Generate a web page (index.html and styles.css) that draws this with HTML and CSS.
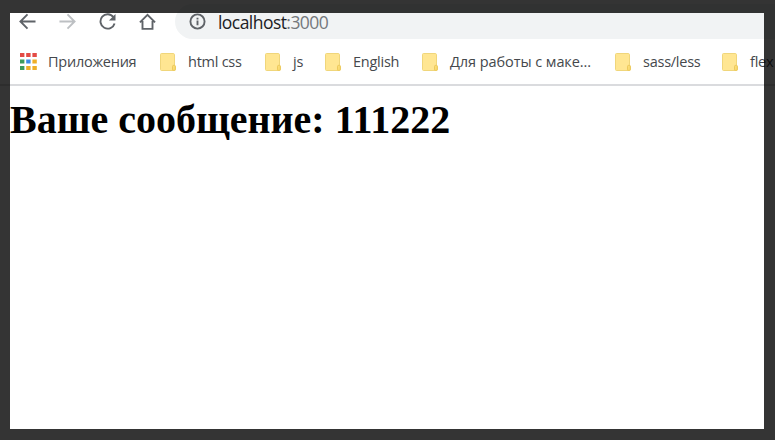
FILE: index.html
```
<!DOCTYPE html>
<html lang="ru">
<head>
<meta charset="utf-8">
<title>localhost:3000</title>
<link rel="stylesheet" href="styles.css">
</head>
<body>
<svg class="defs" aria-hidden="true"><symbol id="folder" viewBox="0 0 16 18"><path d="M1.5.5h11.7c.8 0 1.3.5 1.3 1.2v10.6c.7.2 1 .6 1 1.2v3c0 .7-.4 1-1 1h-13c-.6 0-1-.4-1-1v-15c0-.6.4-1 1-1z" fill="#ffe692" stroke="#f0d67b"/><path d="M12.5 16.8v-3.3c0-.8.5-1.2 1.3-1.2s1.5.4 1.5 1.2v3c0 .6-.4.8-1 .8h-1.2c-.4 0-.6-.2-.6-.5z" fill="#fbdc74" stroke="#ecc95c"/></symbol></svg>
<header class="toolbar">
  <svg class="nav" viewBox="0 0 18 18"><path d="M17.5 9H2M9 1.5 1.5 9 9 16.5"/></svg>
  <svg class="nav muted" viewBox="0 0 18 18"><path d="M.5 9H16M9 1.5 16.5 9 9 16.5"/></svg>
  <svg class="nav" viewBox="0 0 18 18"><path d="M15.3 4.4A7.6 7.6 0 1 0 16.5 11"/><path class="solid" d="M17.5 1v7h-7z"/></svg>
  <svg class="nav" viewBox="0 0 18 18"><path d="M1 10 9 2l8 8M3.7 8.5v8.3h10.6V8.5"/></svg>
  <div class="address">
    <svg class="info" viewBox="0 0 18 18"><circle cx="9" cy="9" r="7.5"/><path d="M9 8v5M9 5v2"/></svg>
    <span class="url">localhost<span class="port">:3000</span></span>
  </div>
</header>
<nav class="bookmarks">
  <a class="item apps"><svg viewBox="0 0 18 18"><path fill="#e34b45" d="M0 0h4.4v4H0zM6.2 0h4.4v4H6.2zM12.4 0h4.4v4h-4.4z"/><path fill="#3e9b5c" d="M0 6.5h4.4v4H0zM0 13h4.4v4H0z"/><path fill="#3c8be8" d="M6.2 6.5h4.4v4H6.2z"/><path fill="#eeaf28" d="M12.4 6.5h4.4v4h-4.4zM6.2 13h4.4v4H6.2zM12.4 13h4.4v4h-4.4z"/></svg><span>Приложения</span></a>
  <a class="item html"><svg><use href="#folder"/></svg><span>html css</span></a>
  <a class="item js"><svg><use href="#folder"/></svg><span>js</span></a>
  <a class="item english"><svg><use href="#folder"/></svg><span>English</span></a>
  <a class="item work"><svg><use href="#folder"/></svg><span>Для работы с маке...</span></a>
  <a class="item sass"><svg><use href="#folder"/></svg><span>sass/less</span></a>
  <a class="item flex"><svg><use href="#folder"/></svg><span>flex</span></a>
</nav>
<main><h1>Ваше сообщение: 111222</h1></main>
</body>
</html>
```
FILE: styles.css
```
* { box-sizing: border-box; }
body { margin: 0; height: 440px; overflow: hidden; position: relative; background: #fff; font-family: "Open Sans", "Noto Sans", sans-serif; }
body::after { content: ""; position: absolute; inset: 0; border: solid rgba(0, 0, 0, .795); border-width: 13px 11px 11px 10px; }
.defs { display: none; }
.toolbar { height: 39px; padding: 4px 0 0 19px; display: flex; align-items: center; gap: 23px; }
.nav, .info { width: 17px; height: 17px; flex: none; fill: none; stroke: #5f6368; stroke-width: 2; }
.muted { stroke: #bdc0c3; }
.nav .solid { fill: #5f6368; stroke: none; }
.address { flex: 1; height: 35px; margin-left: -4px; padding-left: 14px; display: flex; align-items: center; background: #f1f3f4; border-radius: 18px 0 0 18px; }
.info { margin-right: 12px; }
.url { font-size: 17.5px; letter-spacing: -.55px; color: #202124; }
.port { color: #74787c; }
.bookmarks { height: 47px; padding-left: 20px; display: flex; align-items: center; border-bottom: 2px solid #dadbde; }
.item { display: flex; align-items: center; flex: none; white-space: nowrap; font-size: 14.5px; letter-spacing: -.25px; color: #45484c; }
.item svg { width: 16px; height: 18px; margin-right: 12px; flex: none; }
.apps { width: 140px; }
.apps svg { width: 18px; margin-right: 10px; }
.html { width: 105px; }
.js { width: 60px; }
.english { width: 97px; }
.work { width: 193px; letter-spacing: -.07px; }
.sass { width: 107px; }
.flex { width: 60px; }
h1 { margin: 10px 0 0 10px; font: bold 40px/48px "Liberation Serif", serif; color: #000; white-space: nowrap; }
```
